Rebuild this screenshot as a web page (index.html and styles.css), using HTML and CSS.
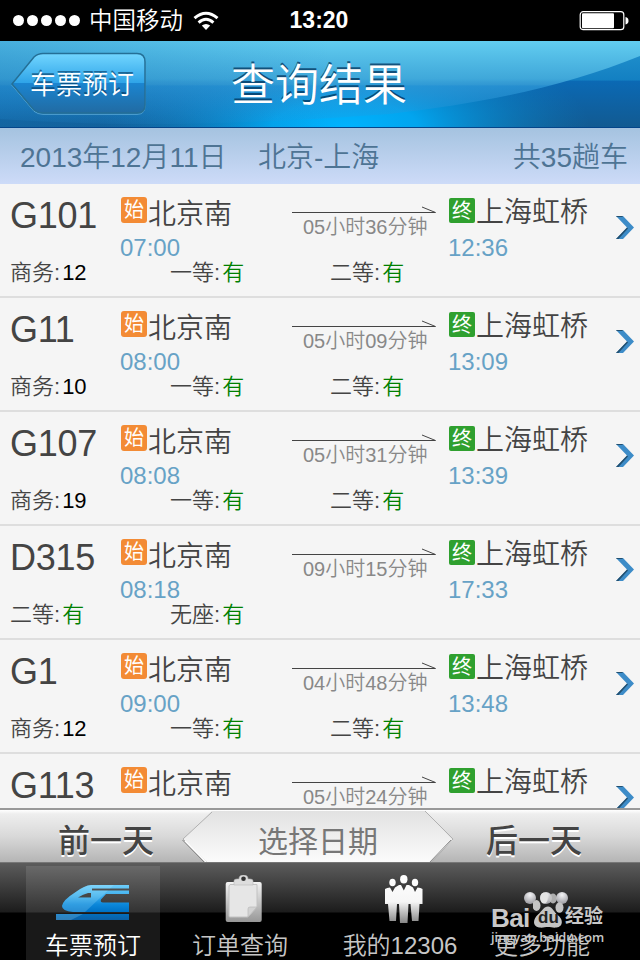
FILE: index.html
```html
<!DOCTYPE html>
<html lang="zh-CN">
<head>
  <meta charset="UTF-8">
  <meta name="viewport" content="width=device-width, initial-scale=1.0">
  <title>查询结果</title>
  <link rel="stylesheet" href="styles.css">
</head>
<body>

<!-- shapes shared by all train rows -->
<svg class="shared" width="0" height="0">
  <symbol id="arrow" viewBox="0 0 144 8">
    <path d="M0 6.500 H143.500 L130 1" fill="none" stroke="#444"/>
  </symbol>
  <symbol id="chevron" viewBox="0 0 19 24">
    <path d="M0 0 H7 L18 11.500 L7 23 H0 L11 11.500 Z" fill="#3d8cc8"/>
    <path d="M0 0 H6 L7 1 H1 Z M0 23 L11 11.500 L12 12.500 L2.500 23 Z" fill="#24506f"/>
  </symbol>
</svg>

<div class="app">
  <div class="status-bar">
    <div class="carrier">
      <div class="dots"><i></i><i></i><i></i><i></i><i></i></div>
      <span class="carrier-name">中国移动</span>
      <svg class="wifi" width="26" height="20" viewBox="0 0 26 20">
        <g fill="none" stroke="#fff" stroke-width="3">
          <path d="M1.5 7.2 Q13 -2.8 24.5 7.2"/>
          <path d="M5.6 11.6 Q13 5 20.4 11.6"/>
        </g>
        <path d="M8.8 14.6 Q13 11.2 17.2 14.6 L13 19 Z" fill="#fff"/>
      </svg>
    </div>
    <span class="clock">13:20</span>
    <svg class="battery" width="50" height="20" viewBox="0 0 50 20">
      <rect x="1.2" y="0.7" width="43.6" height="18" rx="3" fill="none" stroke="#fff" stroke-width="1.2"/>
      <rect x="3" y="2.2" width="32" height="15" rx="1" fill="#fff"/>
      <path d="M46.500 6 Q49.500 6.500 49.500 9.700 Q49.500 12.900 46.500 13.400 Z" fill="#fff"/>
    </svg>
  </div>

  <div class="nav-bar">
    <svg class="nav-bg" width="640" height="87" viewBox="0 0 640 87" preserveAspectRatio="none">
      <defs>
        <linearGradient id="navBase" x1="0" y1="0" x2="0" y2="1">
          <stop offset="0" stop-color="#2494cf"/>
          <stop offset="0.45" stop-color="#1380c2"/>
          <stop offset="0.46" stop-color="#0b69b4"/>
          <stop offset="1" stop-color="#125a91"/>
        </linearGradient>
        <radialGradient id="navGlow" gradientUnits="userSpaceOnUse" cx="0" cy="0" r="1" gradientTransform="translate(345 87) scale(245 90)">
          <stop offset="0" stop-color="#00b4ff"/>
          <stop offset="0.3" stop-color="#00adf8" stop-opacity="0.9"/>
          <stop offset="1" stop-color="#0d82c4" stop-opacity="0"/>
        </radialGradient>
        <linearGradient id="navShine" x1="0" y1="0" x2="0" y2="1">
          <stop offset="0" stop-color="#62cdf0"/>
          <stop offset="0.45" stop-color="#45acdc" stop-opacity="0.9"/>
          <stop offset="0.53" stop-color="#3aa0d8" stop-opacity="0.8"/>
          <stop offset="0.54" stop-color="#2f99d8" stop-opacity="0.75"/>
          <stop offset="1" stop-color="#2a94d8" stop-opacity="0.1"/>
        </linearGradient>
        <linearGradient id="navLeft" x1="0" y1="0" x2="1" y2="0">
          <stop offset="0" stop-color="#1777ba" stop-opacity="0.35"/>
          <stop offset="1" stop-color="#1777ba" stop-opacity="0"/>
        </linearGradient>
      </defs>
      <rect width="640" height="87" fill="url(#navBase)"/>
      <rect width="640" height="87" fill="url(#navGlow)"/>
      <path d="M0 0 H640 V15 C570 43 500 60 390 73 C200 87 90 84 0 78 Z" fill="url(#navShine)"/>
      <rect width="330" height="87" fill="url(#navLeft)"/>
      <rect y="86" width="640" height="1" fill="#04458a"/>
    </svg>
    <div class="back-btn">
      <svg class="back-shape" width="138" height="66" viewBox="0 0 138 66">
        <defs>
          <linearGradient id="backFill" x1="0" y1="0" x2="0" y2="1">
            <stop offset="0" stop-color="#72d6ff"/>
            <stop offset="0.49" stop-color="#2fa4e8"/>
            <stop offset="0.5" stop-color="#1b85d0"/>
            <stop offset="1" stop-color="#216ba3"/>
          </linearGradient>
        </defs>
        <path d="M2 33 L24 6 Q28 2.500 33 2.500 H127 Q135 2.500 135 11 V54 Q135 62 127 62 H33 Q28 62 24 59 Z" transform="translate(0 1.300)" fill="none" stroke="#7fc6ea" stroke-opacity="0.6"/>
        <path d="M2 33 L24 6 Q28 2.500 33 2.500 H127 Q135 2.500 135 11 V54 Q135 62 127 62 H33 Q28 62 24 59 Z" fill="url(#backFill)" stroke="#246f96" stroke-width="1.500"/>
      </svg>
      <span class="back-text">车票预订</span>
    </div>
    <h1 class="nav-title">查询结果</h1>
  </div>

  <div class="summary">
    <span class="summary-date">2013年12月11日</span>
    <span class="summary-route">北京-上海</span>
    <span class="summary-count">共35趟车</span>
  </div>

  <div class="train-list">
    <div class="train">
      <div class="trip">
        <div class="train-no">G101</div>
        <div class="stop">
          <div class="station"><b class="tag start">始</b>北京南</div>
          <div class="time">07:00</div>
        </div>
        <div class="duration">
          <svg class="arrow" width="144" height="8"><use href="#arrow"/></svg>
          <div>05小时36分钟</div>
        </div>
        <div class="stop dest">
          <div class="station"><b class="tag end">终</b>上海虹桥</div>
          <div class="time">12:36</div>
        </div>
        <svg class="chevron" width="19" height="24"><use href="#chevron"/></svg>
      </div>
      <div class="seats">
        <span>商务:<em class="num">12</em></span>
        <span>一等:<em>有</em></span>
        <span>二等:<em>有</em></span>
      </div>
    </div>

    <div class="train">
      <div class="trip">
        <div class="train-no">G11</div>
        <div class="stop">
          <div class="station"><b class="tag start">始</b>北京南</div>
          <div class="time">08:00</div>
        </div>
        <div class="duration">
          <svg class="arrow" width="144" height="8"><use href="#arrow"/></svg>
          <div>05小时09分钟</div>
        </div>
        <div class="stop dest">
          <div class="station"><b class="tag end">终</b>上海虹桥</div>
          <div class="time">13:09</div>
        </div>
        <svg class="chevron" width="19" height="24"><use href="#chevron"/></svg>
      </div>
      <div class="seats">
        <span>商务:<em class="num">10</em></span>
        <span>一等:<em>有</em></span>
        <span>二等:<em>有</em></span>
      </div>
    </div>

    <div class="train">
      <div class="trip">
        <div class="train-no">G107</div>
        <div class="stop">
          <div class="station"><b class="tag start">始</b>北京南</div>
          <div class="time">08:08</div>
        </div>
        <div class="duration">
          <svg class="arrow" width="144" height="8"><use href="#arrow"/></svg>
          <div>05小时31分钟</div>
        </div>
        <div class="stop dest">
          <div class="station"><b class="tag end">终</b>上海虹桥</div>
          <div class="time">13:39</div>
        </div>
        <svg class="chevron" width="19" height="24"><use href="#chevron"/></svg>
      </div>
      <div class="seats">
        <span>商务:<em class="num">19</em></span>
        <span>一等:<em>有</em></span>
        <span>二等:<em>有</em></span>
      </div>
    </div>

    <div class="train">
      <div class="trip">
        <div class="train-no">D315</div>
        <div class="stop">
          <div class="station"><b class="tag start">始</b>北京南</div>
          <div class="time">08:18</div>
        </div>
        <div class="duration">
          <svg class="arrow" width="144" height="8"><use href="#arrow"/></svg>
          <div>09小时15分钟</div>
        </div>
        <div class="stop dest">
          <div class="station"><b class="tag end">终</b>上海虹桥</div>
          <div class="time">17:33</div>
        </div>
        <svg class="chevron" width="19" height="24"><use href="#chevron"/></svg>
      </div>
      <div class="seats">
        <span>二等:<em>有</em></span>
        <span>无座:<em>有</em></span>
      </div>
    </div>

    <div class="train">
      <div class="trip">
        <div class="train-no">G1</div>
        <div class="stop">
          <div class="station"><b class="tag start">始</b>北京南</div>
          <div class="time">09:00</div>
        </div>
        <div class="duration">
          <svg class="arrow" width="144" height="8"><use href="#arrow"/></svg>
          <div>04小时48分钟</div>
        </div>
        <div class="stop dest">
          <div class="station"><b class="tag end">终</b>上海虹桥</div>
          <div class="time">13:48</div>
        </div>
        <svg class="chevron" width="19" height="24"><use href="#chevron"/></svg>
      </div>
      <div class="seats">
        <span>商务:<em class="num">12</em></span>
        <span>一等:<em>有</em></span>
        <span>二等:<em>有</em></span>
      </div>
    </div>

    <!-- last row is cut off by the toolbar -->
    <div class="train">
      <div class="trip">
        <div class="train-no">G113</div>
        <div class="stop">
          <div class="station"><b class="tag start">始</b>北京南</div>
        </div>
        <div class="duration">
          <svg class="arrow" width="144" height="8"><use href="#arrow"/></svg>
          <div>05小时24分钟</div>
        </div>
        <div class="stop dest">
          <div class="station"><b class="tag end">终</b>上海虹桥</div>
        </div>
        <svg class="chevron" width="19" height="24"><use href="#chevron"/></svg>
      </div>
    </div>
  </div>

  <div class="day-bar">
    <div class="day prev">前一天</div>
    <div class="pick">
      <svg class="pick-shape" width="272" height="52" viewBox="0 0 272 52">
        <defs>
          <linearGradient id="pickFill" x1="0" y1="0" x2="0" y2="1">
            <stop offset="0" stop-color="#e2e2e2"/>
            <stop offset="1" stop-color="#fbfbfb"/>
          </linearGradient>
        </defs>
        <path d="M30 1 H243 L271 30 L248 52 H25 L1 29 Z" fill="url(#pickFill)"/>
        <path d="M30 2 L1 29 L25 53" fill="none" stroke="#b0b0b0"/>
        <path d="M3 31 L24 52" fill="none" stroke="#fff" stroke-width="1.500"/>
        <path d="M0.500 30 L23 53" fill="none" stroke="#808080"/>
        <path d="M243 1 L271 29 L249 53" fill="none" stroke="#b0b0b0"/>
        <path d="M269 30 L247 53" fill="none" stroke="#8a8a8a"/>
      </svg>
      <span>选择日期</span>
    </div>
    <div class="day next">后一天</div>
  </div>

  <div class="tab-bar">
    <div class="tab active">
      <svg width="74" height="36" viewBox="0 0 74 36">
        <defs>
          <linearGradient id="trainFill" gradientUnits="userSpaceOnUse" x1="0" y1="0" x2="0" y2="35">
            <stop offset="0" stop-color="#6ecdfa"/>
            <stop offset="0.3" stop-color="#41b0ec"/>
            <stop offset="0.55" stop-color="#0c88da"/>
            <stop offset="0.75" stop-color="#0074c8"/>
            <stop offset="1" stop-color="#0a5fa4"/>
          </linearGradient>
        </defs>
        <path d="M35 0 H73 V3.500 H36 V5.500 H73 V9 H50 L45 14.500 Q44 17.500 47 17.500 H73 V27 H17 Q6 26 6 21 Q7 15 19 7.500 Q29 0 35 0 Z M22 12.500 H35 V8 H32 Q27 9 22 12.500 Z M0 29 H73 V35 H0 Z" fill="url(#trainFill)" fill-rule="evenodd"/>
        <path d="M35 0 H58 L54 3.500 H36 V5.500 H52 L44 13 L29 27 H17 Q6 26 6 21 Q7 15 19 7.500 Q29 0 35 0 Z M22 12.500 H35 V8 H32 Q27 9 22 12.500 Z M0 29 H27 L15 35 H0 Z" fill="#b5ecff" fill-opacity="0.22" fill-rule="evenodd"/>
      </svg>
      <span>车票预订</span>
    </div>
    <div class="tab orders">
      <svg width="38" height="48" viewBox="0 0 38 48">
        <defs>
          <linearGradient id="clipFill" x1="0" y1="0" x2="0" y2="1">
            <stop offset="0" stop-color="#f4f4f4"/>
            <stop offset="1" stop-color="#979797"/>
          </linearGradient>
        </defs>
        <rect x="0.700" y="7" width="36" height="40" rx="2" fill="url(#clipFill)"/>
        <path d="M5 9.500 H32 V32 L23 42 H5 Q4 42 4 41 V11 Z" fill="#e6e6e6" stroke="#c2c2c2"/>
        <path d="M32 32 H25 Q23 32 23 34 V42 Z" fill="#d2d2d2" stroke="#b9b9b9" stroke-width="0.700"/>
        <path d="M9 10 V6 Q9 4 12 4 H14 Q14 0 18.500 0 Q23 0 23 4 H25 Q28 4 28 6 V10 Z" fill="#ddd" stroke="#bbb" stroke-width="0.600"/>
        <circle cx="18.500" cy="3.700" r="2.300" fill="#333"/>
      </svg>
      <span>订单查询</span>
    </div>
    <div class="tab mine">
      <svg width="40" height="48" viewBox="0 0 40 48">
        <defs>
          <linearGradient id="manFill" gradientUnits="userSpaceOnUse" x1="0" y1="0" x2="0" y2="48">
            <stop offset="0" stop-color="#fff"/>
            <stop offset="0.560" stop-color="#f6f6f6"/>
            <stop offset="1" stop-color="#868686"/>
          </linearGradient>
        </defs>
        <g fill="url(#manFill)">
          <ellipse cx="8.500" cy="7.500" rx="3.200" ry="3.800"/>
          <ellipse cx="31" cy="7.500" rx="3.200" ry="3.800"/>
          <ellipse cx="19.800" cy="4.200" rx="3.700" ry="4.200"/>
          <path d="M1 14 Q3 12.500 6 12.500 L8.500 17 L11 12.500 L15 10 L17 10 L19.800 15.500 L22.500 10 L25 10 L29 12.500 L31 17 L33.500 12.500 Q37 12.500 38.500 14 V29 H35.500 L34.500 46 H28 L26.500 29 H24.500 L23.500 48 H16 L15 29 H13 L12 46 H5.500 L4 29 H1 Z"/>
        </g>
      </svg>
      <span>我的12306</span>
    </div>
    <div class="tab more">
      <svg width="44" height="20" viewBox="0 0 44 20">
        <defs>
          <radialGradient id="ball" cx="0.500" cy="0.250" r="0.800">
            <stop offset="0" stop-color="#f4f4f6"/>
            <stop offset="1" stop-color="#96969c"/>
          </radialGradient>
        </defs>
        <circle cx="6" cy="6" r="6" fill="url(#ball)"/>
        <circle cx="22" cy="6" r="6" fill="url(#ball)"/>
        <circle cx="38" cy="6" r="6" fill="url(#ball)"/>
      </svg>
      <span>更多功能</span>
    </div>
  </div>

  <div class="watermark">
    <div class="wm-logo">
      <b class="wm-bai">Bai</b>
      <span class="wm-paw">
        <svg width="31" height="38" viewBox="0 0 31 38">
          <g fill="#c4c4c4">
            <ellipse cx="3.500" cy="13.500" rx="4" ry="5.400"/>
            <ellipse cx="11" cy="6" rx="3.800" ry="5.500" fill="#e4e4e4"/>
            <ellipse cx="20" cy="6.500" rx="3.800" ry="5" fill-opacity="0.850"/>
            <ellipse cx="26.500" cy="15.500" rx="4" ry="5.300"/>
            <path d="M15 14.500 C19 14.500 20 18.500 24 22.500 C31 27 30 35 23.500 35.500 C20 36 18 35 15 35 C12 35 10 36 6 35.500 C-1 34.500 0 27 5 22.500 C9 19 11 14.500 15 14.500 Z"/>
          </g>
        </svg>
        <b class="wm-du">du</b>
      </span>
      <b class="wm-jy">经验</b>
    </div>
    <div class="wm-url">jingyan.baidu.com</div>
  </div>
</div>

</body>
</html>
```

FILE: styles.css
```css
body {
  font-family: "Liberation Sans", "Noto Sans CJK SC", sans-serif;
  font-weight: 350;
  margin: 0;
  padding: 0;
  background-color: #000;
}

.shared {
  display: block;
}

.app {
  position: relative;
  display: flex;
  flex-direction: column;
  width: 640px;
  height: 960px;
  overflow: hidden;
  white-space: nowrap;
}

/* status bar */
.status-bar {
  display: grid;
  grid-template-columns: 1fr auto 1fr;
  align-items: center;
  height: 41px;
  padding: 0 11px 0 13px;
  box-sizing: border-box;
  background-color: #000;
  color: #fff;
}

.carrier {
  display: flex;
  align-items: center;
}

.dots {
  display: flex;
  gap: 3px;
}

.dots i {
  width: 11px;
  height: 11px;
  border-radius: 50%;
  background-color: #fff;
}

.carrier-name {
  margin-left: 9px;
  font-size: 23.5px;
  line-height: 40px;
}

.wifi {
  margin-left: 10px;
}

.clock {
  margin-right: 4px;
  font-size: 23px;
  font-weight: bold;
}

.battery {
  justify-self: end;
}

/* navigation bar */
.nav-bar {
  position: relative;
  display: flex;
  align-items: center;
  height: 87px;
}

.nav-bg {
  position: absolute;
  left: 0;
  top: 0;
}

.back-btn {
  position: relative;
  width: 138px;
  height: 66px;
  margin: -2px 0 0 10px;
}

.back-shape {
  position: absolute;
  left: 0;
  top: 0;
}

.back-text {
  position: relative;
  display: block;
  padding-left: 20px;
  font-size: 26px;
  line-height: 69px;
  color: #fff;
  text-shadow: 0 -2px 0 rgba(0, 50, 90, 0.6);
}

.nav-title {
  position: relative;
  margin: 2px 0 0 83px;
  font-size: 44px;
  font-weight: 350;
  line-height: 84px;
  color: #fff;
  text-shadow: 0 -2px 0 rgba(0, 50, 90, 0.75);
}

/* date and route */
.summary {
  display: flex;
  height: 56px;
  padding: 0 12px 0 20px;
  font-size: 28px;
  line-height: 59px;
  color: #4e7494;
  background: linear-gradient(#a5c3e0, #cddbf8);
}

.summary-date {
  width: 238px;
}

.summary-count {
  margin-left: auto;
}

/* train list */
.train-list {
  height: 624px;
  overflow: hidden;
  background-color: #f5f5f5;
}

.train {
  height: 112px;
  border-bottom: 2px solid #dedede;
  color: #444;
}

.trip {
  display: grid;
  grid-template-columns: 110px 172px 144px 167px 19px;
  height: 76px;
  padding-left: 10px;
}

.train-no {
  font-size: 36px;
  line-height: 64px;
  letter-spacing: -0.3px;
}

.station {
  display: flex;
  align-items: center;
  height: 34px;
  padding-top: 14px;
  font-size: 28px;
  line-height: 34px;
}

.tag {
  width: 26px;
  height: 26px;
  margin: -10px 1px 0 1px;
  border-radius: 3px;
  font-size: 20px;
  font-weight: 400;
  line-height: 27px;
  text-align: center;
  color: #fff;
}

.start {
  background-color: #f38b35;
}

.end {
  height: 25px;
  margin-top: -6px;
  border-radius: 2px;
  background-color: #2fa02f;
}

.time {
  font-size: 24px;
  line-height: 32px;
  color: #67a2c6;
}

.duration {
  padding-top: 22px;
  font-size: 20px;
  line-height: 27px;
  text-indent: 11px;
  color: #888;
}

.arrow {
  display: block;
}

.dest {
  padding-left: 12px;
}

.dest .station {
  padding-top: 12px;
}

.dest .time {
  padding-top: 2px;
}

.chevron {
  margin: 32px 0 0 13px;
}

.seats {
  display: grid;
  grid-template-columns: repeat(3, 160px);
  padding-left: 10px;
  font-size: 22px;
  line-height: 26px;
}

.seats em {
  margin-left: 2px;
  font-style: normal;
  color: #008000;
}

.seats .num {
  color: #000;
}

/* previous / next day */
.day-bar {
  display: grid;
  grid-template-columns: 182px 272px 1fr;
  height: 52px;
  border-top: 2px solid #999;
  border-bottom: 1px solid #777;
  background: linear-gradient(#fff 0, #eee 4px, #d9d9d9 50%, #b5b5b5);
  line-height: 63px;
}

.day {
  font-size: 32px;
  font-weight: 500;
  color: #444;
  text-shadow: 0 2px 0 #fff;
}

.prev {
  padding-left: 58px;
}

.next {
  padding-left: 32px;
}

.pick {
  position: relative;
  font-size: 30px;
  font-weight: 400;
  text-align: center;
  color: #777;
}

.pick-shape {
  position: absolute;
  left: 0;
  top: 0;
}

.pick span {
  position: relative;
}

/* tab bar */
.tab-bar {
  display: grid;
  grid-template-columns: 134px 160px 160px 124px;
  height: 97px;
  padding: 0 26px;
  box-sizing: border-box;
  background: linear-gradient(#5c5c5c, #1c1c1c 49px, #000 50px);
  font-size: 24px;
  line-height: 32px;
  color: #c6c6c6;
}

.tab {
  display: grid;
  grid-template-rows: 67px 30px;
  justify-items: center;
}

.tab.active {
  grid-template-rows: 64px 30px;
  margin-top: 3px;
  background: linear-gradient(#696969, #333 46px, #191919 47px);
  color: #fff;
}

.tab.active svg {
  margin-top: 19px;
}

.tab.orders svg {
  margin: 12px 0 0 8px;
}

.tab.mine svg {
  margin: 12px 0 0 8px;
}

.tab.more svg {
  margin: 29px 0 0 8px;
}

/* logo stamped over the last tab */
.watermark {
  position: absolute;
  left: 491px;
  top: 892px;
  color: #c8c8c8;
}

.wm-logo {
  display: flex;
  height: 37px;
}

.wm-bai {
  width: 42px;
  padding-top: 10px;
  font-size: 26px;
  font-weight: bold;
  line-height: 32px;
  letter-spacing: -0.6px;
}

.wm-paw {
  position: relative;
  width: 32px;
}

.wm-du {
  position: absolute;
  left: 5px;
  top: 14px;
  font-size: 17px;
  font-weight: bold;
  line-height: 24px;
  color: #222;
}

.wm-jy {
  padding-top: 9px;
  font-size: 19px;
  font-weight: bold;
  line-height: 32px;
}

.wm-url {
  font-family: "Open Sans", sans-serif;
  font-size: 12.8px;
  font-weight: 600;
  line-height: 17px;
}
```
